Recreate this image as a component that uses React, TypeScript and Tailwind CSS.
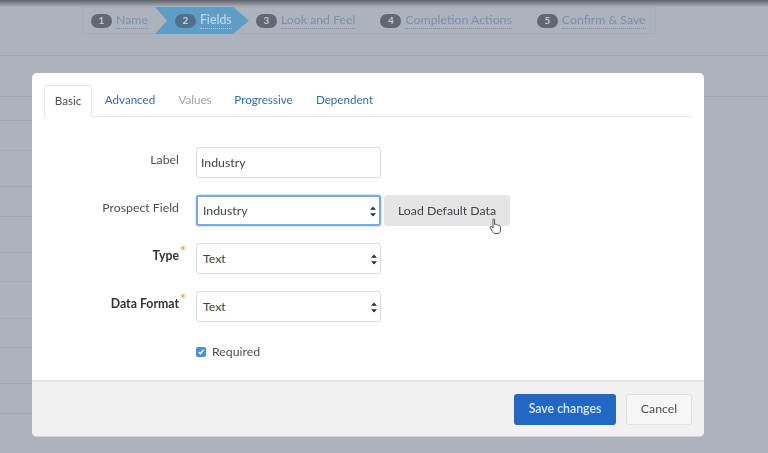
import React from "react";

const leftLines = [23, 29, 35, 29, 35, 28, 36, 28, 35, 29];

function Step({ n, label, active }: { n: string; label: string; active?: boolean }) {
  return (
    <div className="flex items-center gap-[4px]">
      <span className={`flex h-[14px] w-[21px] items-center justify-center rounded-full text-[10px] font-bold ${active ? "bg-[#4f7189] text-[#c5d3dc]" : "bg-[#5f6873] text-[#c4c9cf]"}`}>{n}</span>
      <span className={`border-b border-dotted pb-[1px] text-[12.3px] leading-[15px] ${active ? "border-[#a8cadf] font-semibold text-[#b9d6e6]" : "border-[#7f8ea6] text-[#7c8fb0]"}`}>{label}</span>
    </div>
  );
}

function Chevrons() {
  return (
    <svg width="8" height="11" viewBox="0 0 8 11" className="shrink-0 text-[#2b2f36]">
      <path d="M4 0.5 L7 3.8 L1 3.8 Z M4 10.5 L7 7.2 L1 7.2 Z" fill="currentColor" />
    </svg>
  );
}

function Row({ label, bold, req, children, className }: { label: string; bold?: boolean; req?: boolean; children: React.ReactNode; className?: string }) {
  return (
    <div className={`flex items-start ${className ?? ""}`}>
      <div className={`relative mr-[17px] w-[147px] pt-[4px] text-right text-[12.3px] leading-[17px] ${bold ? "font-bold text-[#2f3237]" : "text-[#4b4e53]"}`}>
        {label}
        {req && <span className="absolute right-[-6px] top-[3px] h-[4px] w-[4px] rounded-full bg-[#e9b765]" />}
      </div>
      {children}
    </div>
  );
}

function SelectBox({ value, focus }: { value: string; focus?: boolean }) {
  return (
    <div className={`flex h-[31px] w-[185px] items-center justify-between rounded-[3px] bg-white pr-[2px] pt-[1px] text-[12.3px] text-[#3f4246] ${focus ? "border-2 border-[#7da9dc] pl-[5px] shadow-[0_0_2px_#7da9dc]" : "border border-[#dcdcdc] pl-[6px]"}`}>
      <span>{value}</span>
      <Chevrons />
    </div>
  );
}

export default function App() {
  return (
    <div className="relative h-[453px] w-[768px] overflow-hidden bg-[#adb3bc] font-['Lato',sans-serif]">
      <div className="h-full w-full blur-[0.5px]">
        <div className="h-[7px] bg-gradient-to-b from-[#5f626b] to-[#adb3bc]" />
        <div className="ml-[82px] flex h-[27px] w-[574px] items-center border border-[#a7adb7] pl-[8px]">
          <Step n="1" label="Name" />
          <div className="relative ml-[7px] flex h-[27px] w-[94px] items-center pl-[20px]">
            <svg className="absolute left-0 top-0" width="94" height="27" viewBox="0 0 94 27">
              <path d="M0 0 H78 L94 13.5 L78 27 H0 L12 13.5 Z" fill="#5e9ec6" />
            </svg>
            <div className="relative"><Step n="2" label="Fields" active /></div>
          </div>
          <div className="ml-[7px]"><Step n="3" label="Look and Feel" /></div>
          <div className="ml-[25px]"><Step n="4" label="Completion Actions" /></div>
          <div className="ml-[25px]"><Step n="5" label="Confirm &amp; Save" /></div>
        </div>
        <div className="mt-[21px] h-px bg-[#a3a9b2]" />
        <div className="mt-[40px] h-px bg-[#a3a9b2]" />
        {leftLines.map((gap, i) => (
          <div key={i} style={{ marginTop: gap }} className="h-px w-[32px] bg-[#a3a9b2]" />
        ))}

        <div className="absolute left-[32px] top-[73px] flex h-[364px] w-[672px] flex-col overflow-hidden rounded-[5px] border-b border-[#cfd2d6] bg-white">
          <div className="flex-1 px-[12px] pt-[12px]">
            <div className="flex h-[32px] items-end border-b border-[#e6e6e6] text-[11.6px]">
              <div className="-mb-px flex h-[32px] w-[48px] items-center justify-center rounded-t-[3px] border border-b-white border-[#e6e6e6] bg-white text-[#4b4e53]">Basic</div>
              <div className="flex h-[32px] w-[76px] items-center justify-center text-[#2f6eab]">Advanced</div>
              <div className="flex h-[32px] w-[54px] items-center justify-center text-[#9fa2a6]">Values</div>
              <div className="flex h-[32px] w-[83px] items-center justify-center text-[#2f6eab]">Progressive</div>
              <div className="flex h-[32px] w-[79px] items-center justify-center text-[#2f6eab]">Dependent</div>
            </div>

            <div className="-ml-[12px] mt-[30px]">
              <Row label="Label">
                <div className="flex h-[31px] w-[185px] items-center rounded-[3px] border border-[#dcdcdc] bg-white pl-[4px] pt-[1px] text-[12.3px] text-[#3f4246]">Industry</div>
              </Row>
              <Row label="Prospect Field" className="mt-[17px]">
                <SelectBox value="Industry" focus />
                <div className="relative ml-[3px] flex h-[31px] w-[126px] items-center justify-center rounded-[3px] bg-[#e5e5e5] pt-[1px] text-[12.3px] text-[#3f4246]">
                  Load Default Data
                  <svg className="absolute left-[105px] top-[23px]" width="13" height="17" viewBox="0 0 13 17" fill="#fff" stroke="#55585c" strokeWidth="1" strokeLinejoin="round">
                    <path d="M4 1.5 C4 .6 5.6 .6 5.6 1.5 V6.6 C6.4 6 7.4 6.2 7.6 7 C8.4 6.6 9.3 6.9 9.5 7.6 C10.4 7.3 11.5 7.8 11.5 9 V12 C11.5 14 10.5 15.5 9 15.5 H6 C4.8 15.5 4 14.6 3.3 13.4 L1.2 9.6 C.8 8.8 1.8 8 2.6 8.7 L4 10 Z" />
                  </svg>
                </div>
              </Row>
              <Row label="Type" bold req className="mt-[17px]"><SelectBox value="Text" /></Row>
              <Row label="Data Format" bold req className="mt-[17px]"><SelectBox value="Text" /></Row>
              <div className="ml-[164px] mt-[21px] flex items-center gap-[6px] text-[12.3px] text-[#4b4e53]">
                <span className="flex h-[10px] w-[10px] items-center justify-center rounded-[2px] bg-[#4a90d9]">
                  <svg width="8" height="8" viewBox="0 0 8 8" fill="none" stroke="#fff" strokeWidth="1.4"><path d="M1.5 4 L3.3 5.8 L6.5 2" /></svg>
                </span>
                Required
              </div>
            </div>
          </div>
          <div className="flex h-[56px] items-center justify-end gap-[10px] border-t-2 border-[#e4e4e4] bg-[#f1f1f1] pr-[12px]">
            <div className="flex h-[31px] w-[102px] items-center justify-center rounded-[3px] bg-[#2068c4] pt-[1px] text-[12.3px] font-semibold text-[#dfeaf7]">Save changes</div>
            <div className="flex h-[31px] w-[66px] items-center justify-center rounded-[3px] border border-[#e0e0e0] bg-[#f6f6f6] pt-[1px] text-[12.3px] text-[#4b4e53]">Cancel</div>
          </div>
        </div>
      </div>
    </div>
  );
}
